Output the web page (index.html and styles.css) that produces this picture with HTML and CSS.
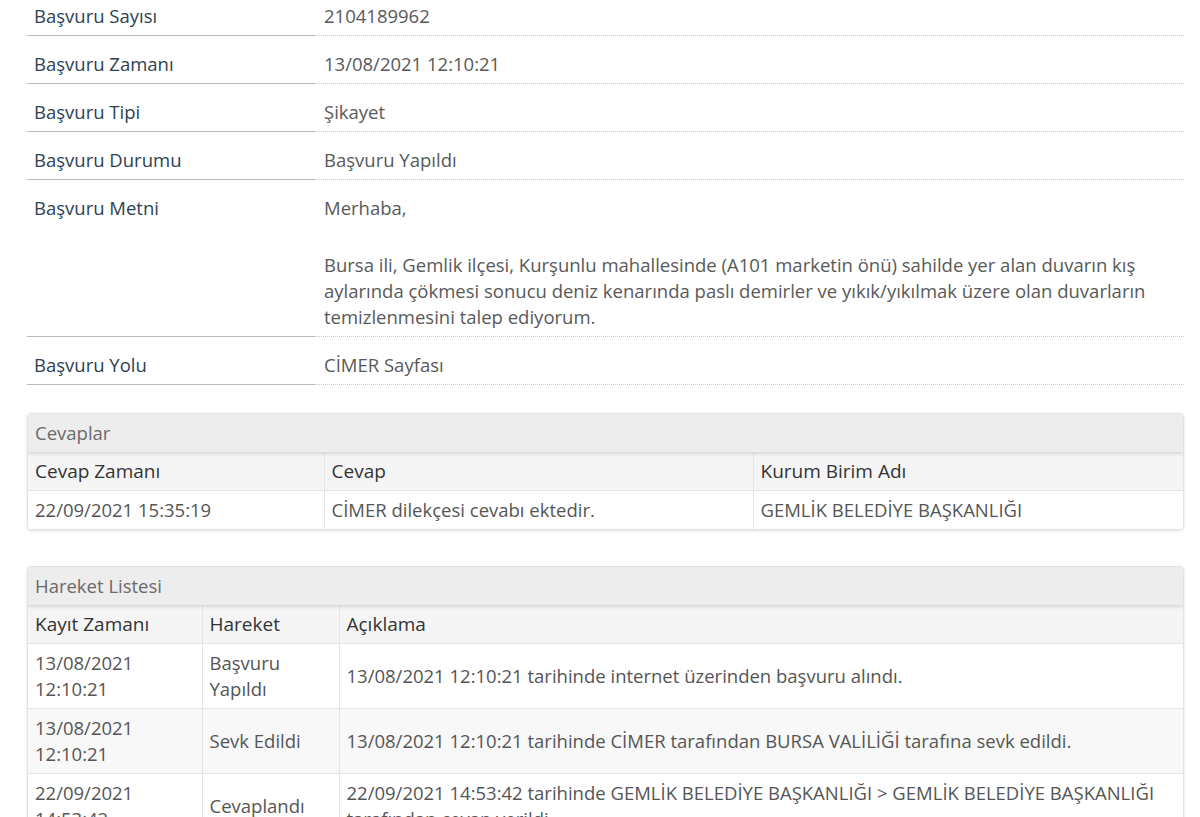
FILE: index.html
```html
<!DOCTYPE html>
<html lang="tr">
<head>
    <meta charset="UTF-8">
    <meta name="viewport" content="width=device-width, initial-scale=1.0">
    <title>Başvuru Detayı</title>
    <link rel="stylesheet" href="styles.css">
</head>
<body>
    <div class="page">
        <div class="detail">
            <div class="detail-row">
                <div class="detail-label">Başvuru Sayısı</div>
                <div class="detail-value">2104189962</div>
            </div>
            <div class="detail-row">
                <div class="detail-label">Başvuru Zamanı</div>
                <div class="detail-value">13/08/2021 12:10:21</div>
            </div>
            <div class="detail-row">
                <div class="detail-label">Başvuru Tipi</div>
                <div class="detail-value">Şikayet</div>
            </div>
            <div class="detail-row">
                <div class="detail-label">Başvuru Durumu</div>
                <div class="detail-value">Başvuru Yapıldı</div>
            </div>
            <div class="detail-row">
                <div class="detail-label">Başvuru Metni</div>
                <div class="detail-value">
                    <div>Merhaba,</div>
                    <p class="detail-text">Bursa ili, Gemlik ilçesi, Kurşunlu mahallesinde (A101 marketin önü) sahilde yer alan duvarın kış aylarında çökmesi sonucu deniz kenarında paslı demirler ve yıkık/yıkılmak üzere olan duvarların temizlenmesini talep ediyorum.</p>
                </div>
            </div>
            <div class="detail-row">
                <div class="detail-label">Başvuru Yolu</div>
                <div class="detail-value">CİMER Sayfası</div>
            </div>
        </div>

        <div class="panel panel-answers">
            <div class="panel-heading">Cevaplar</div>
            <table class="grid">
                <colgroup>
                    <col style="width: 296px">
                    <col style="width: 429px">
                    <col>
                </colgroup>
                <thead>
                    <tr>
                        <th>Cevap Zamanı</th>
                        <th>Cevap</th>
                        <th>Kurum Birim Adı</th>
                    </tr>
                </thead>
                <tbody>
                    <tr>
                        <td>22/09/2021 15:35:19</td>
                        <td>CİMER dilekçesi cevabı ektedir.</td>
                        <td>GEMLİK BELEDİYE BAŞKANLIĞI</td>
                    </tr>
                </tbody>
            </table>
        </div>

        <div class="panel panel-history">
            <div class="panel-heading">Hareket Listesi</div>
            <table class="grid">
                <colgroup>
                    <col style="width: 174px">
                    <col style="width: 137px">
                    <col>
                </colgroup>
                <thead>
                    <tr>
                        <th>Kayıt Zamanı</th>
                        <th>Hareket</th>
                        <th>Açıklama</th>
                    </tr>
                </thead>
                <tbody>
                    <tr>
                        <td>13/08/2021<br>12:10:21</td>
                        <td>Başvuru<br>Yapıldı</td>
                        <td>13/08/2021 12:10:21 tarihinde internet üzerinden başvuru alındı.</td>
                    </tr>
                    <tr>
                        <td>13/08/2021<br>12:10:21</td>
                        <td>Sevk Edildi</td>
                        <td>13/08/2021 12:10:21 tarihinde CİMER tarafından BURSA VALİLİĞİ tarafına sevk edildi.</td>
                    </tr>
                    <tr>
                        <td>22/09/2021<br>14:53:42</td>
                        <td>Cevaplandı</td>
                        <td>22/09/2021 14:53:42 tarihinde GEMLİK BELEDİYE BAŞKANLIĞI &gt; GEMLİK BELEDİYE BAŞKANLIĞI tarafından cevap verildi.</td>
                    </tr>
                </tbody>
            </table>
        </div>
    </div>
</body>
</html>
```

FILE: styles.css
```css
body {
    margin: 0;
    padding: 0;
    background-color: #ffffff;
    font-family: "Open Sans", "Liberation Sans", sans-serif;
    font-size: 18.5px;
    color: #555;
}

.page {
    margin-top: -12px;
    padding: 0 16px 40px 27px;
}

.detail-row {
    display: grid;
    grid-template-columns: 288px 1fr;
}

.detail-label {
    padding: 15px 7px 6px 7px;
    line-height: 26px;
    color: #2c4252;
    border-bottom: 1px solid #b8bcc0;
}

.detail-value {
    padding: 15px 6px 6px 9px;
    line-height: 26px;
    color: #595959;
    border-bottom: 1px dotted #c8c8c8;
}

.detail-text {
    margin: 31px 0 0 0;
}

.panel {
    border: 1px solid #e2e2e2;
    border-radius: 4px;
    box-shadow: 0 1px 3px rgba(0, 0, 0, 0.12);
    overflow: hidden;
}

.panel-answers {
    margin-top: 28px;
}

.panel-history {
    margin-top: 36px;
}

.panel-heading {
    background-color: #ededed;
    padding: 6px 7px;
    line-height: 26px;
    color: #6a6a6a;
    box-shadow: 0 2px 3px rgba(0, 0, 0, 0.12);
    position: relative;
}

.grid {
    width: 100%;
    border-collapse: collapse;
    table-layout: fixed;
}

.grid th,
.grid td {
    padding: 6px 7px;
    line-height: 26px;
    text-align: left;
    vertical-align: middle;
    border-left: 1px solid #e4e4e4;
    border-top: 1px solid #e4e4e4;
}

.grid th:first-child,
.grid td:first-child {
    border-left: none;
}

.grid thead tr:first-child th {
    border-top: none;
}

.grid th {
    font-size: 19px;
    font-weight: normal;
    color: #333;
    background-color: #f5f5f5;
}

.grid td {
    color: #555;
    background-color: #ffffff;
}

.panel-history tbody tr:nth-child(even) td {
    background-color: #f8f8f8;
}
```
